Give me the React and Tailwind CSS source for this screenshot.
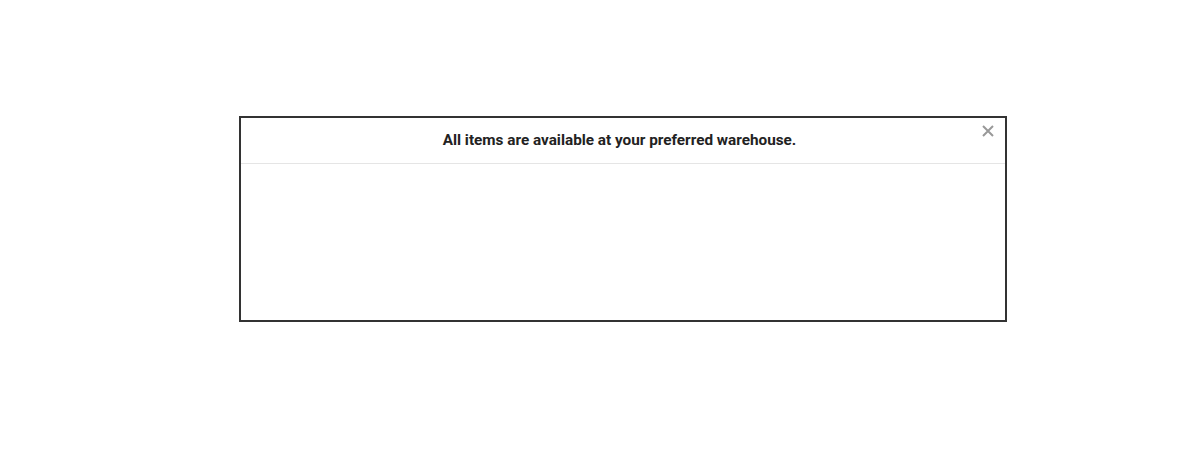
import React from "react";

function AvailabilityModal() {
  return (
    <div className="ml-[239px] mt-[116px] w-[768px] h-[206px] border-2 border-[#333333] bg-white">
      <div className="relative h-[46px] flex items-center justify-center pr-[7px] border-b border-[#e5e5e5]">
        <h4 className="text-[15.3px] font-bold text-[#222222]" style={{ fontFamily: "Roboto, sans-serif" }}>
          All items are available at your preferred warehouse.
        </h4>
        <button type="button" className="absolute right-[11px] top-[7px] w-[12px] h-[12px] text-[#999999]" aria-label="Close">
          <svg width="12" height="12" viewBox="0 0 12 12">
            <path d="M1 1 L11 11 M11 1 L1 11" stroke="currentColor" strokeWidth="2" />
          </svg>
        </button>
      </div>
      <div />
    </div>
  );
}

export default function App() {
  return (
    <div className="w-[1200px] h-[450px] bg-white overflow-hidden">
      <AvailabilityModal />
    </div>
  );
}
